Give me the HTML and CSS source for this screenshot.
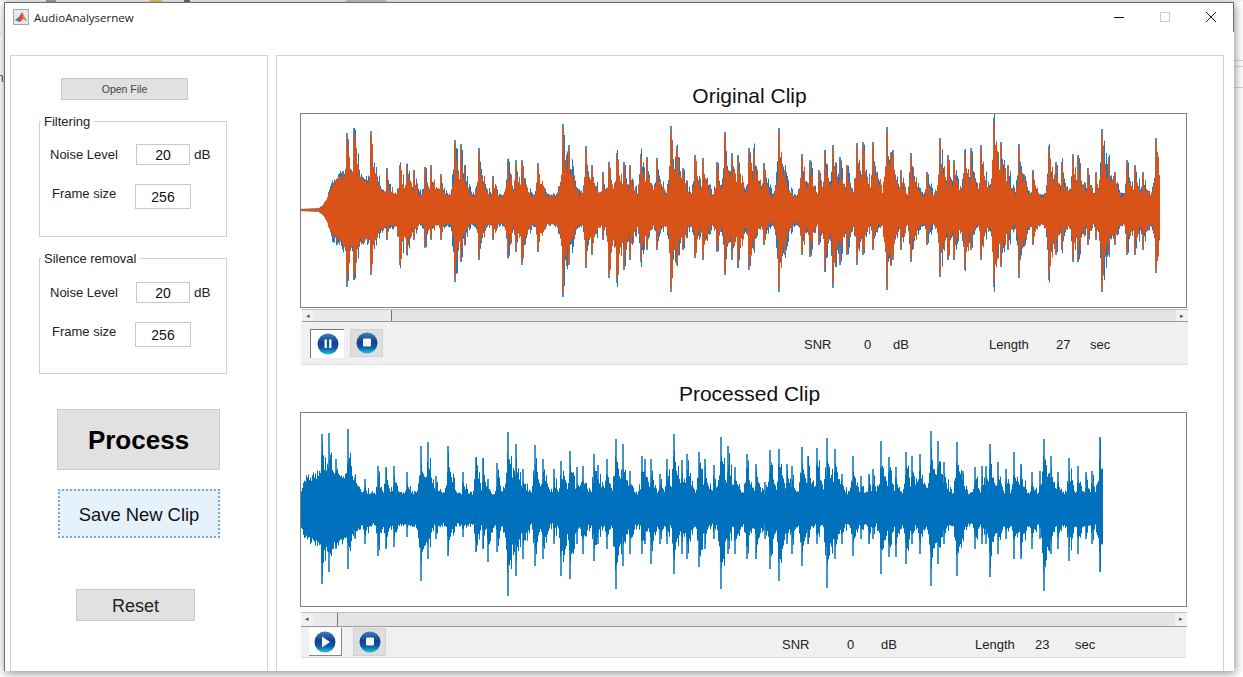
FILE: index.html
```html
<!DOCTYPE html>
<html lang="en">
<head>
    <meta charset="UTF-8">
    <title>AudioAnalysernew</title>
    <link rel="stylesheet" href="styles.css">
</head>
<body>

    <div class="desk-line desk-line-a"></div>
    <div class="desk-line desk-line-b"></div>
    <div class="desk-line desk-line-c"></div>

    <div class="desk-top">
        <span class="desk-chip desk-chip-a"></span>
        <span class="desk-chip desk-chip-b"></span>
        <span class="desk-chip desk-chip-c"></span>
        <span class="desk-chip desk-chip-d"></span>
    </div>
    <div class="desk-left">
        <span class="desk-letter desk-letter-a">t</span>
        <span class="desk-letter desk-letter-b">n</span>
    </div>

    <svg class="defs" width="0" height="0">
        <defs>
            <linearGradient id="ballGrad" x1="0" y1="0" x2="0" y2="1">
                <stop offset="0" stop-color="#3f7fc0"/>
                <stop offset="0.45" stop-color="#123f88"/>
                <stop offset="0.7" stop-color="#0b5aa6"/>
                <stop offset="1" stop-color="#25c6dc"/>
            </linearGradient>
        </defs>
    </svg>

    <div class="window">
        <div class="titlebar">
            <svg class="app-icon" width="16" height="16" viewBox="0 0 16 16">
                <rect x="0.5" y="0.5" width="15" height="15" fill="#e6ebf2" stroke="#9aa6b4"/>
                <path d="M2 11 L6 8 L9 3 L11 7 L14 12 L10 10 L7 13 Z" fill="#d2501f"/>
                <path d="M2 11 L6 8 L7 13 Z" fill="#4d7fb0"/>
                <path d="M9 3 L11 7 L14 12 L10 10 Z" fill="#ee8a3c"/>
            </svg>
            <span class="app-title">AudioAnalysernew</span>
            <div class="win-buttons">
                <svg class="win-btn" width="12" height="12" viewBox="0 0 12 12"><path d="M1 6.5 H11" stroke="#111" stroke-width="1"/></svg>
                <svg class="win-btn" width="12" height="12" viewBox="0 0 12 12"><rect x="1.5" y="1.5" width="9" height="9" fill="none" stroke="#ccc"/></svg>
                <svg class="win-btn" width="12" height="12" viewBox="0 0 12 12"><path d="M1 1 L11 11 M11 1 L1 11" stroke="#111" stroke-width="1"/></svg>
            </div>
        </div>

        <div class="content">
            <div class="side-panel">
                <button class="btn btn-open">Open File</button>

                <div class="group">
                    <span class="group-title">Filtering</span>
                    <div class="row row-noise">
                        <label class="row-label">Noise Level</label>
                        <input class="num-field" type="text" value="20">
                        <span class="unit">dB</span>
                    </div>
                    <div class="row row-frame">
                        <label class="row-label">Frame size</label>
                        <input class="num-field" type="text" value="256">
                    </div>
                </div>

                <div class="group group-silence">
                    <span class="group-title">Silence removal</span>
                    <div class="row row-noise">
                        <label class="row-label">Noise Level</label>
                        <input class="num-field" type="text" value="20">
                        <span class="unit">dB</span>
                    </div>
                    <div class="row row-frame">
                        <label class="row-label">Frame size</label>
                        <input class="num-field" type="text" value="256">
                    </div>
                </div>

                <button class="btn btn-process">Process</button>
                <button class="btn btn-save">Save New Clip</button>
                <button class="btn btn-reset">Reset</button>
            </div>

            <div class="main-panel">
                <section class="clip clip-original">
                    <h2 class="clip-title">Original Clip</h2>
                    <div class="axes"><canvas id="originalWave" width="885" height="193"></canvas></div>
                    <div class="scrollbar">
                        <span class="arrow">&#9666;</span>
                        <span class="thumb"></span>
                        <span class="track"></span>
                        <span class="arrow">&#9656;</span>
                    </div>
                    <div class="toolbar">
                        <button class="tool tool-pressed">
                            <svg width="24" height="24" viewBox="0 0 24 24">
                                <circle cx="12" cy="12" r="10.5" fill="url(#ballGrad)"/>
                                <path d="M8.5 7.5 H11 V16 H8.5 Z M13 7.5 H15.5 V16 H13 Z" fill="#e8f2fa"/>
                            </svg>
                        </button>
                        <button class="tool tool-grey">
                            <svg width="24" height="24" viewBox="0 0 24 24">
                                <circle cx="12" cy="12" r="10.5" fill="url(#ballGrad)"/>
                                <rect x="8" y="7.5" width="8" height="8" rx="1" fill="#f2f7fb"/>
                            </svg>
                        </button>
                        <div class="stats">
                            <span class="stat">SNR</span>
                            <span class="stat">0</span>
                            <span class="stat">dB</span>
                            <span class="stat">Length</span>
                            <span class="stat">27</span>
                            <span class="stat">sec</span>
                        </div>
                    </div>
                </section>

                <section class="clip clip-processed">
                    <h2 class="clip-title">Processed Clip</h2>
                    <div class="axes"><canvas id="processedWave" width="885" height="193"></canvas></div>
                    <div class="scrollbar">
                        <span class="arrow">&#9666;</span>
                        <span class="thumb"></span>
                        <span class="track"></span>
                        <span class="arrow">&#9656;</span>
                    </div>
                    <div class="toolbar">
                        <button class="tool tool-raised">
                            <svg width="24" height="24" viewBox="0 0 24 24">
                                <circle cx="12" cy="12" r="10.5" fill="url(#ballGrad)"/>
                                <path d="M9 6.5 L17 12 L9 17.5 Z" fill="#eef6fb"/>
                            </svg>
                        </button>
                        <button class="tool tool-grey">
                            <svg width="24" height="24" viewBox="0 0 24 24">
                                <circle cx="12" cy="12" r="10.5" fill="url(#ballGrad)"/>
                                <rect x="8" y="7.5" width="8" height="8" rx="1" fill="#f2f7fb"/>
                            </svg>
                        </button>
                        <div class="stats">
                            <span class="stat">SNR</span>
                            <span class="stat">0</span>
                            <span class="stat">dB</span>
                            <span class="stat">Length</span>
                            <span class="stat">23</span>
                            <span class="stat">sec</span>
                        </div>
                    </div>
                </section>
            </div>
        </div>
    </div>

    <script src="waveform.js"></script>
</body>
</html>
```

FILE: styles.css
```css
* {
    box-sizing: border-box;
}

body {
    margin: 0;
    height: 677px;
    overflow: hidden;
    background-color: #fff;
    font-family: "Liberation Sans", Arial, sans-serif;
}

.defs {
    position: absolute;
}

/* bits of the desktop that show round the window */
.desk-line {
    position: absolute;
    right: 0;
    width: 9px;
    height: 1px;
    background-color: #d8d8d8;
}

.desk-line-a { top: 60px; }
.desk-line-b { top: 66px; }
.desk-line-c { top: 87px; }

.desk-top {
    position: absolute;
    left: 0;
    top: 0;
    width: 100%;
    height: 2px;
    background-color: #f3f3f3;
}

.desk-chip {
    position: absolute;
    top: 0;
    height: 2px;
}

.desk-chip-a { left: 46px; width: 10px; background-color: #9a9fa8; }
.desk-chip-b { left: 150px; width: 12px; background-color: #e8c66a; }
.desk-chip-c { left: 184px; width: 6px; background-color: #5a6f8a; }
.desk-chip-d { left: 346px; width: 40px; background-color: #c4c8d0; }

.desk-left {
    position: absolute;
    left: 0;
    top: 0;
    width: 4px;
    height: 100%;
    overflow: hidden;
    font-size: 12px;
    color: #444;
}

.desk-letter {
    position: absolute;
    left: -3px;
}

.desk-letter-a { top: 23px; }
.desk-letter-b { top: 71px; }

.window {
    position: absolute;
    left: 4px;
    top: 2px;
    width: 1230px;
    height: 669px;
    background-color: #fff;
    border-top: 1px solid #6e6e6e;
    border-left: 1px solid #6e6e6e;
    box-shadow: 1px 2px 9px rgba(0, 0, 0, 0.45);
    display: flex;
    flex-direction: column;
    overflow: hidden;
}

.titlebar {
    height: 29px;
    flex: none;
    display: flex;
    align-items: center;
    padding-left: 8px;
    padding-bottom: 1px;
    border-right: 1px solid #6e6e6e;
}

.app-icon {
    flex: none;
}

.app-title {
    margin-left: 5px;
    font-family: "Open Sans", sans-serif;
    font-size: 11.5px;
    color: #222;
}

.win-buttons {
    margin-left: auto;
    margin-right: 16px;
    display: flex;
    gap: 34px;
}

.content {
    flex: 1;
    margin-top: 23px;
    padding: 0 10px 0 5px;
    display: flex;
    gap: 8px;
    min-height: 0;
}

.side-panel {
    width: 258px;
    flex: none;
    border: 1px solid #d2d2d2;
    border-bottom: none;
    padding-top: 22px;
    display: flex;
    flex-direction: column;
    align-items: flex-start;
}

.main-panel {
    flex: 1;
    border: 1px solid #d2d2d2;
    border-bottom: none;
    padding-top: 28px;
}

.btn {
    display: block;
    background-color: #e1e1e1;
    border: 1px solid #cbcbcb;
    padding: 0;
    font-family: inherit;
    color: #111;
}

.btn-open {
    margin-left: 50px;
    width: 127px;
    height: 22px;
    font-size: 10.5px;
    color: #444;
}

.group {
    position: relative;
    margin-top: 21px;
    margin-left: 28px;
    width: 188px;
    height: 116px;
    border: 1px solid #d0d0d0;
    padding-top: 22px;
    padding-left: 10px;
}

.group-silence {
    padding-top: 23px;
}

.group-title {
    position: absolute;
    left: 1px;
    top: -8px;
    padding: 0 3px;
    background-color: #fff;
    font-size: 13px;
    color: #222;
}

.row {
    display: flex;
    align-items: center;
    font-size: 13px;
    color: #222;
}

.row-noise {
    height: 21px;
}

.row-frame {
    height: 25px;
    margin-top: 19px;
}

.row-label {
    width: 86px;
}

.row-frame .row-label {
    width: 85px;
    padding-left: 2px;
    margin-bottom: 6px;
}

.num-field {
    width: 54px;
    height: 21px;
    border: 1px solid #c8c8c8;
    padding: 0;
    text-align: center;
    font-family: inherit;
    font-size: 14px;
    color: #111;
}

.row-frame .num-field {
    width: 56px;
    height: 25px;
}

.unit {
    margin-left: 4px;
    font-size: 13.5px;
}

.btn-process {
    margin-top: 35px;
    margin-left: 46px;
    width: 163px;
    height: 61px;
    padding-top: 2px;
    font-size: 26px;
    font-weight: bold;
    color: #000;
}

.btn-save {
    margin-top: 19px;
    margin-left: 47px;
    width: 162px;
    height: 49px;
    padding-top: 2px;
    font-size: 18.4px;
    background-color: #e5f1fb;
    border: 2px dotted #7fa9cf;
}

.btn-reset {
    margin-top: 51px;
    margin-left: 65px;
    width: 119px;
    height: 32px;
    padding-top: 2px;
    font-size: 18px;
    color: #222;
}

.clip {
    margin-left: 23px;
    width: 899px;
}

.clip-title {
    margin: 0;
    height: 24px;
    line-height: 24px;
    text-align: center;
    font-size: 21px;
    font-weight: normal;
    color: #111;
}

.axes {
    margin-top: 5px;
    width: 887px;
    height: 195px;
    border: 1px solid #808080;
}

.axes canvas {
    display: block;
    filter: blur(0.45px);
}

.clip-processed {
    margin-top: 17px;
}

.clip-processed .axes {
    margin-top: 6px;
}

.scrollbar {
    margin-top: 1px;
    margin-left: 2px;
    width: 886px;
    height: 13px;
    display: flex;
    background-color: #e4e4e4;
    border-top: 1px solid #c0c0c0;
    border-bottom: 1px solid #9a9a9a;
}

.clip-processed .scrollbar {
    margin-top: 5px;
    margin-left: 1px;
    height: 15px;
}

.arrow {
    width: 12px;
    flex: none;
    background-color: #f1f1f1;
    font-size: 7px;
    line-height: 11px;
    text-align: center;
    color: #555;
}

.thumb {
    width: 78px;
    flex: none;
    background-color: #eaeaea;
    border-right: 1px solid #777;
}

.clip-processed .thumb {
    width: 25px;
}

.track {
    flex: 1;
}

.toolbar {
    margin-left: 1px;
    width: 887px;
    height: 43px;
    display: flex;
    align-items: center;
    background-color: #f0f0f0;
    border-bottom: 1px solid #dcdcdc;
    padding-left: 9px;
}

.clip-processed .toolbar {
    width: 885px;
    height: 31px;
    padding-left: 8px;
}

.tool {
    width: 34px;
    height: 29px;
    flex: none;
    padding: 0;
    border: none;
    display: flex;
    align-items: center;
    justify-content: center;
    background-color: #fff;
}

.tool-pressed {
    border-top: 1px solid #777;
    border-left: 1px solid #777;
}

.tool-raised {
    width: 33px;
    height: 28px;
    border-right: 1px solid #888;
    border-bottom: 1px solid #888;
}

.tool-grey {
    width: 33px;
    height: 28px;
    margin-left: 6px;
    background-color: #dedede;
    border: 1px solid #d2d2d2;
}

.clip-processed .tool-grey {
    margin-left: 11px;
}

.stats {
    display: flex;
    font-size: 13px;
    color: #222;
    padding-top: 3px;
}

.clip-original .stats { margin-left: 421px; }
.clip-processed .stats { margin-left: 396px; padding-top: 5px; }

.stat:nth-child(1) { width: 60px; }
.stat:nth-child(2) { width: 29px; }
.stat:nth-child(3) { width: 96px; }
.stat:nth-child(4) { width: 67px; }
.stat:nth-child(5) { width: 34px; }

.clip-processed .stat:nth-child(1) { width: 65px; }
.clip-processed .stat:nth-child(2) { width: 34px; }
.clip-processed .stat:nth-child(3) { width: 94px; }
.clip-processed .stat:nth-child(4) { width: 60px; }
.clip-processed .stat:nth-child(5) { width: 40px; }
```

FILE: waveform.js
```js
// spikes are [x on the page, height above centre, depth below centre]
const originalSpikes = [
    [347,77,77],[354,82,70],[371,79,65],[387,42,30],[400,45,55],[407,46,45],[414,40,30],[425,43,38],
    [431,45,30],[441,36,30],[455,70,72],[461,66,52],[479,62,50],[493,34,30],[508,51,48],[516,50,42],
    [522,50,55],[538,47,42],[563,86,87],[569,65,55],[586,64,58],[592,45,45],[603,38,30],[609,48,68],
    [617,57,73],[624,48,60],[630,45,50],[641,56,52],[647,53,40],[657,52,40],[671,84,82],[677,64,55],
    [683,42,40],[695,55,48],[703,52,50],[717,48,42],[725,78,65],[732,57,50],[738,55,58],[749,62,60],
    [754,62,40],[764,47,35],[779,82,82],[785,40,45],[802,56,45],[810,50,47],[819,40,35],[825,60,62],
    [833,65,78],[840,53,55],[847,45,45],[857,67,55],[863,68,45],[873,68,40],[887,83,80],[893,60,50],
    [901,40,40],[911,57,52],[927,38,35],[940,72,67],[948,55,50],[954,50,50],[965,60,60],[971,62,40],
    [981,65,50],[994,92,77],[1001,68,57],[1008,45,40],[1019,66,68],[1033,40,35],[1049,64,70],[1056,48,45],
    [1062,48,40],[1073,56,52],[1078,55,52],[1088,42,35],[1096,38,30],[1102,81,82],[1109,53,45],[1115,38,35],
    [1127,50,45],[1135,45,45],[1143,38,40],[1156,72,63]
];

const processedSpikes = [
    [322,75,75],[329,76,63],[336,50,40],[348,80,60],[355,32,30],[365,30,35],[378,43,47],[386,42,40],
    [394,43,38],[407,37,28],[421,63,72],[428,67,50],[436,33,30],[448,63,47],[463,37,28],[476,52,43],
    [483,51,40],[488,30,53],[497,46,43],[508,77,87],[516,65,67],[523,40,50],[535,64,57],[543,50,50],
    [554,40,35],[561,48,67],[570,58,70],[577,42,35],[583,43,45],[594,55,52],[598,44,35],[607,50,40],
    [616,70,80],[623,65,57],[630,38,45],[642,53,45],[645,50,35],[651,50,55],[660,35,35],[667,50,35],
    [674,75,65],[682,49,45],[687,55,50],[699,57,58],[705,50,40],[714,44,30],[721,72,80],[728,63,45],
    [735,42,45],[747,55,50],[756,45,50],[765,27,30],[770,59,60],[779,60,72],[787,45,35],[792,43,45],
    [802,62,57],[808,53,35],[817,61,35],[827,71,79],[835,60,50],[842,35,35],[853,53,47],[861,33,30],
    [869,35,35],[873,40,30],[881,68,65],[889,52,48],[896,42,48],[906,57,55],[912,53,35],[920,55,45],
    [931,78,77],[938,68,55],[944,47,35],[957,67,67],[963,38,30],[975,42,40],[982,43,35],[986,43,35],
    [990,65,68],[998,47,45],[1006,40,30],[1014,57,50],[1021,45,50],[1032,37,40],[1040,38,30],[1044,70,82],
    [1051,53,45],[1058,37,40],[1069,51,52],[1078,43,45],[1086,37,30],[1092,38,35],[1100,72,63]
];

function makeRandom(seed) {
    return function () {
        seed = (seed * 16807) % 2147483647;
        return seed / 2147483647;
    };
}

// piecewise line through [x, value] points
function lerpPoints(points, x) {
    if (x <= points[0][0]) return points[0][1];
    for (let i = 1; i < points.length; i++) {
        if (x <= points[i][0]) {
            const a = points[i - 1], b = points[i];
            return a[1] + (b[1] - a[1]) * (x - a[0]) / (b[0] - a[0]);
        }
    }
    return points[points.length - 1][1];
}

function envelope(spikes, basePoints, x0, x1, seed) {
    const rand = makeRandom(seed);
    const up = [], down = [];
    for (let x = x0; x <= x1; x++) {
        const base = lerpPoints(basePoints, x);
        let u = base * (0.88 + rand() * 0.24);
        let d = base * (0.88 + rand() * 0.24);
        // every so often a column pokes out, so the edge is not a smooth ramp
        const jitter = rand() < 0.25 ? 0.85 + rand() * 0.15 : 0.6 + rand() * 0.2;
        spikes.forEach(function (s) {
            const dist = Math.abs(x - s[0]);
            if (dist > 30) return;
            const fall = Math.exp(-dist / (x >= s[0] ? 9 : 4));
            u = Math.max(u, s[1] * fall * jitter);
            d = Math.max(d, s[2] * fall * jitter);
        });
        up.push(u);
        down.push(d);
    }
    return { up: up, down: down };
}

function fillEnvelope(ctx, env, mid, scale, color) {
    ctx.fillStyle = color;
    env.up.forEach(function (u, i) {
        const top = u * scale, bottom = env.down[i] * scale;
        ctx.fillRect(i, mid - top, 1, top + bottom);
    });
}

function fillSpikes(ctx, spikes, originX, mid, scale, color) {
    ctx.fillStyle = color;
    spikes.forEach(function (s) {
        ctx.fillRect(s[0] - originX - 1, mid - s[1] * scale, 2, (s[1] + s[2]) * scale);
    });
}

function drawOriginal() {
    const ctx = document.getElementById("originalWave").getContext("2d");
    const originX = 301, mid = 210 - 114;
    const base = [[301,1],[318,1.5],[322,4],[326,10],[332,26],[345,36],[370,28],[385,16],[430,14],[1159,14]];
    const blue = envelope(originalSpikes, base, originX, 1159, 4711);
    const orange = envelope(originalSpikes, base, originX, 1159, 991);
    fillEnvelope(ctx, blue, mid, 1.1, "#1f78bd");
    fillSpikes(ctx, originalSpikes, originX, mid, 1, "rgba(30, 120, 190, 0.8)");
    fillSpikes(ctx, originalSpikes, originX, mid, 0.95, "rgba(217, 83, 25, 0.75)");
    fillEnvelope(ctx, orange, mid, 1, "#d95319");
}

function drawProcessed() {
    const ctx = document.getElementById("processedWave").getContext("2d");
    const originX = 301, mid = 509 - 413;
    const base = [[301,20],[306,30],[330,40],[350,26],[365,16],[1095,16],[1098,32],[1101,34],[1102,30]];
    const env = envelope(processedSpikes, base, originX, 1102, 2024);
    fillSpikes(ctx, processedSpikes, originX, mid, 1, "rgba(0, 114, 189, 0.75)");
    fillEnvelope(ctx, env, mid, 1, "#0072bd");
}

drawOriginal();
drawProcessed();
```
